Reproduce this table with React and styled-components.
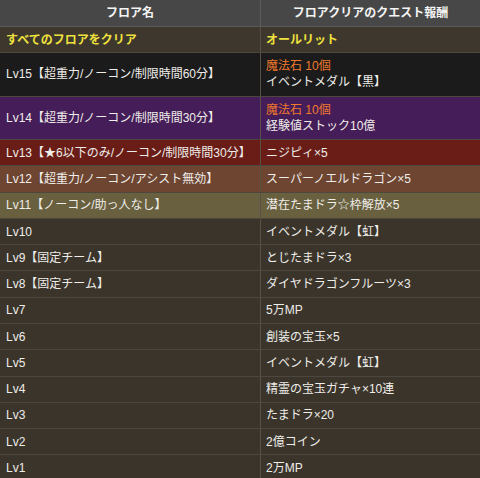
import React from "react";
import styled, { createGlobalStyle } from "styled-components";

const Global = createGlobalStyle`
  html, body { margin: 0; padding: 0; background: #3a342b; }
  body { font-family: "Liberation Sans", "Noto Sans CJK JP", sans-serif; }
  * { box-sizing: border-box; }
`;

const Table = styled.div`
  width: 480px;
  font-size: 12px;
  line-height: 16px;
  color: #efede9;
`;

const rowBg = {
  head: "#474747",
  clear: "#3e372d",
  black: "#1b1b1b",
  purple: "#451d58",
  red: "#6a1d17",
  brown: "#6d4531",
  olive: "#69603f",
  plain: "#3a342b",
};

const Row = styled.div`
  display: grid;
  grid-template-columns: 260px 1fr;
  background: ${(p) => rowBg[p.$tone] || rowBg.plain};
  border-bottom: 1px solid ${(p) => (p.$tone === "head" ? "#5a5a5a" : "#4d473d")};
`;

const HeadCell = styled.div`
  height: 26px;
  display: flex;
  align-items: center;
  justify-content: center;
  font-weight: 700;
  font-size: 12px;
  color: #f4f4f4;
  border-left: ${(p) => (p.$first ? "none" : "1px solid #5c5c5c")};
`;

const Cell = styled.div`
  padding: ${(p) => (p.$tall ? "5.2px" : "4.65px")} 6px
    ${(p) => (p.$tall ? "5.2px" : "4.65px")} ${(p) => (p.$first ? "6px" : "5px")};
  display: flex;
  flex-direction: column;
  justify-content: center;
  border-left: ${(p) => (p.$first ? "none" : "1px solid #57514a")};
  color: ${(p) => (p.$yellow ? "#efe23d" : "#efede9")};
  font-weight: ${(p) => (p.$yellow ? 700 : 400)};
  white-space: nowrap;
  overflow: hidden;
`;

const Orange = styled.div`
  color: #f07a2c;
`;

const Line = styled.div``;

const rows = [
  { tone: "black", floor: "Lv15【超重力/ノーコン/制限時間60分】", reward: ["魔法石 10個", "イベントメダル【黒】"] },
  { tone: "purple", floor: "Lv14【超重力/ノーコン/制限時間30分】", reward: ["魔法石 10個", "経験値ストック10億"] },
  { tone: "red", floor: "Lv13【★6以下のみ/ノーコン/制限時間30分】", reward: "ニジピィ×5" },
  { tone: "brown", floor: "Lv12【超重力/ノーコン/アシスト無効】", reward: "スーパーノエルドラゴン×5" },
  { tone: "olive", floor: "Lv11【ノーコン/助っ人なし】", reward: "潜在たまドラ☆枠解放×5" },
  { floor: "Lv10", reward: "イベントメダル【虹】" },
  { floor: "Lv9【固定チーム】", reward: "とじたまドラ×3" },
  { floor: "Lv8【固定チーム】", reward: "ダイヤドラゴンフルーツ×3" },
  { floor: "Lv7", reward: "5万MP" },
  { floor: "Lv6", reward: "創装の宝玉×5" },
  { floor: "Lv5", reward: "イベントメダル【虹】" },
  { floor: "Lv4", reward: "精霊の宝玉ガチャ×10連" },
  { floor: "Lv3", reward: "たまドラ×20" },
  { floor: "Lv2", reward: "2億コイン" },
  { floor: "Lv1", reward: "2万MP" },
];

export default function App() {
  return (
    <>
      <Global />
      <Table>
        <Row $tone="head">
          <HeadCell $first>フロア名</HeadCell>
          <HeadCell>フロアクリアのクエスト報酬</HeadCell>
        </Row>
        <Row $tone="clear">
          <Cell $first $yellow>すべてのフロアをクリア</Cell>
          <Cell $yellow>オールリット</Cell>
        </Row>
        {rows.map((r) => {
          const tall = Array.isArray(r.reward);
          return (
            <Row key={r.floor} $tone={r.tone}>
              <Cell $first $tall={tall}>{r.floor}</Cell>
              <Cell $tall={tall}>
                {tall ? (
                  <>
                    <Orange>{r.reward[0]}</Orange>
                    <Line>{r.reward[1]}</Line>
                  </>
                ) : (
                  r.reward
                )}
              </Cell>
            </Row>
          );
        })}
      </Table>
    </>
  );
}
